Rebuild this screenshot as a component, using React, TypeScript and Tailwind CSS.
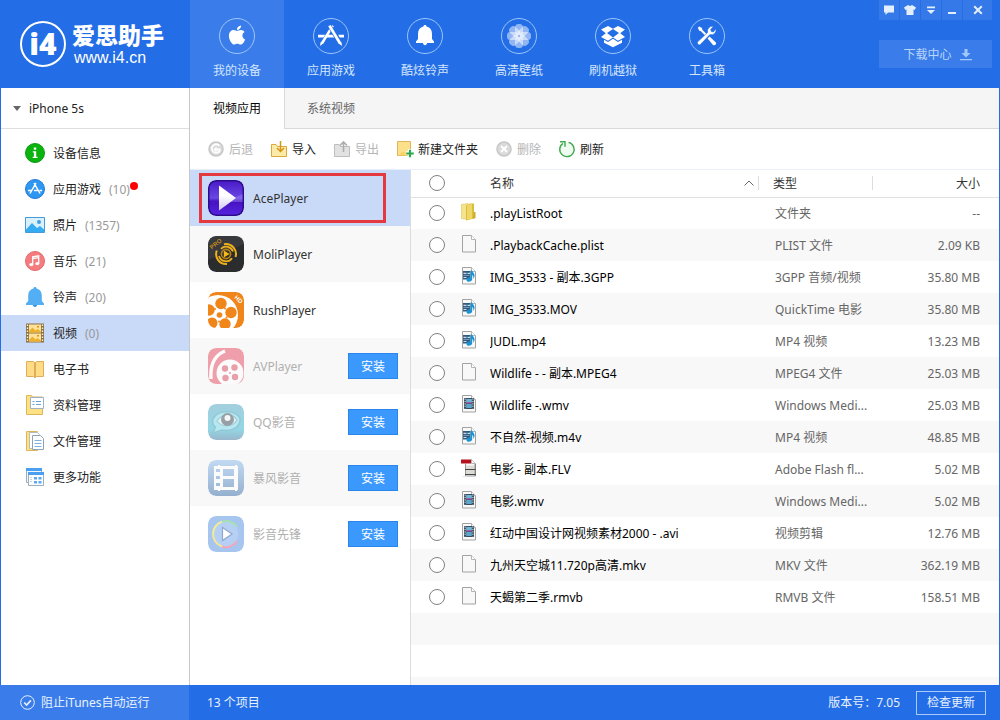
import type { ReactNode } from "react";
import { FaApple } from "react-icons/fa";

/* ---------- top navigation icons (36 x 36) ---------- */

function Ring({ children }: { children: ReactNode }) {
  return (
    <svg viewBox="0 0 36 36" className="size-9" fill="#fff" aria-hidden="true">
      <circle cx="18" cy="18" r="17.5" fill="none" stroke="#9cc6f8" />
      {children}
    </svg>
  );
}

const AppleIcon = () => (
  <Ring>
    <FaApple x="7" y="6" size={22} color="#fff" />
  </Ring>
);

const StoreIcon = () => (
  <Ring>
    <path d="M5 16.8h7.2l-1.6 2.7H5zM15 16.8h7l1.5 2.7H13.4zM25.2 16.8H31v2.7h-4.3z" />
    <path d="M19.8 7.6 9 25.2" stroke="#fff" strokeWidth="2.6" fill="none" />
    <path d="M16.4 7.6 26.8 25.2" stroke="#236de6" strokeWidth="4" fill="none" />
    <path d="M16.4 7.6 27 25.2" stroke="#fff" strokeWidth="2.8" fill="none" />
    <path d="m7.6 24 2.5 1.5L7 28zM25.6 25.4l2.7-1.5.9 4z" />
  </Ring>
);

const BellIcon = () => (
  <Ring>
    <path d="M18 7c1 0 1.6.7 1.6 1.5 3.600.9 5.400 3.500 5.400 7.500v5l2 2.500V25H9v-1.500l2-2.500v-5c0-4 1.800-6.600 5.400-7.500C16.400 7.700 17 7 18 7zM16 25h4c0 1.400-.900 2.200-2 2.200s-2-.800-2-2.200z" />
  </Ring>
);

const FlowerIcon = () => (
  <Ring>
    {[0, 45, 90, 135, 180, 225, 270, 315].map((a) => (
      <rect
        key={a}
        x="14"
        y="6"
        width="8"
        height="11.500"
        rx="3.500"
        fillOpacity=".5"
        transform={`rotate(${a} 18 18)`}
      />
    ))}
    <circle cx="18" cy="18" r="1" fill="#8fb8f6" />
  </Ring>
);

const BoxIcon = () => (
  <Ring>
    <path d="M6 11.500 13 8l5 2.800L23 8l7 3.500-4.800 3.700L30 19l-7 3.700-5-3.200-5 3.200L6 19l4.800-3.800z" />
    <path d="m18 10.900 6 4.200-6 4.300-6-4.300z" fill="#236de6" />
    <path d="m9 21.800 4 2.200 5-3.300 5 3.300 4-2.200v3L18 29.300l-9-4.500z" />
  </Ring>
);

const ToolsIcon = () => (
  <Ring>
    <path d="m8.800 9.800 1.500-1.400 2.700 1.700.3 1.700 6 6-1.400 1.400-6-6-1.600-.4z" />
    <path d="m18.600 20.400 1.900-1.900 6.200 5.700c1.300 1.600-1 3.900-2.700 2.700z" />
    <path
      d="M26.900 10.700a4.800 4.800 0 0 1-6 5.900L11.600 26.300a1.900 1.900 0 0 1-2.700-2.700l9.700-9.200a4.800 4.800 0 0 1 5.900-5.900l-2.800 2.900.6 2.100 2.100.5z"
      stroke="#236de6"
      strokeWidth=".6"
    />
  </Ring>
);

const navItems = [
  { label: "我的设备", icon: <AppleIcon /> },
  { label: "应用游戏", icon: <StoreIcon /> },
  { label: "酷炫铃声", icon: <BellIcon /> },
  { label: "高清壁纸", icon: <FlowerIcon /> },
  { label: "刷机越狱", icon: <BoxIcon /> },
  { label: "工具箱", icon: <ToolsIcon /> },
];

/* ---------- window buttons (12 x 12) ---------- */

const windowButtons = [
  { label: "反馈", wide: false, d: "M1 1.500h10v7H5L2.500 11V8.500H1z" },
  { label: "皮肤", wide: false, d: "M3.500 1.200h1.200c.6 1 2 1 2.600 0h1.200L12 3.400l-1.300 2.500-1.200-.5V11h-7V5.400l-1.200.5L0 3.400z" },
  { label: "菜单", wide: false, d: "M2 2.500h8v1.700H2zM2 6h8l-4 4z" },
  { label: "最小化", wide: false, d: "M2 8h8v2H2z" },
  { label: "关闭", wide: true, d: "m1.500 2.900 1.400-1.400L6 4.600l3.100-3.100 1.400 1.400L7.400 6l3.100 3.100-1.400 1.400L6 7.400l-3.100 3.100-1.400-1.400L4.600 6z" },
];

/* ---------- sidebar icons (20 x 20) ---------- */

function Glyph({ children }: { children: ReactNode }) {
  return (
    <svg viewBox="0 0 20 20" className="size-5 shrink-0" fill="none" aria-hidden="true">
      {children}
    </svg>
  );
}

const sideItems = [
  {
    label: "设备信息",
    icon: (
      <Glyph>
        <circle cx="10" cy="10" r="9.500" fill="#0ab30e" stroke="#0b9a12" />
        <path d="M8.800 4.500h2.400v2.200H8.800zM7.800 8.200h3.400v5.600h1.300v1.300H7.700v-1.300h1.200V9.500H7.800z" fill="#fff" />
      </Glyph>
    ),
  },
  {
    label: "应用游戏",
    count: "(10)",
    dot: true,
    icon: (
      <Glyph>
        <circle cx="10" cy="10" r="9.500" fill="#2e97f2" stroke="#2478d6" />
        <path d="m11 4-6 10.500M9 4l6 10.500M3 11.500h4M9 11.500h3.500M14.500 11.500H17" stroke="#fff" strokeWidth="1.500" />
      </Glyph>
    ),
  },
  {
    label: "照片",
    count: "(1357)",
    icon: (
      <Glyph>
        <path d="M.5 2.500h19v15H.5z" fill="#d9f0fd" stroke="#4a9ad8" />
        <path d="M1 14.500 7 8l5 5 3-2 4 3.500V17H1z" fill="#35abf1" />
        <circle cx="14" cy="7" r="2" fill="#3f9fe4" />
      </Glyph>
    ),
  },
  {
    label: "音乐",
    count: "(21)",
    icon: (
      <Glyph>
        <circle cx="10" cy="10" r="9.500" fill="#f57c7e" stroke="#e4686b" />
        <path d="M7.700 13.500V5.800l6-1v7.600M7.700 7.600l6-1" stroke="#fff" strokeWidth="1.300" />
        <ellipse cx="6.300" cy="13.600" rx="2" ry="1.600" fill="#fff" />
        <ellipse cx="12.300" cy="12.600" rx="2" ry="1.600" fill="#fff" />
      </Glyph>
    ),
  },
  {
    label: "铃声",
    count: "(20)",
    icon: (
      <Glyph>
        <path d="M10 0c1 0 1.600.6 1.600 1.500 3.500 1 5.200 3.500 5.200 7v5.600l2.200 2.400V18H1v-1.500l2.200-2.400V8.500c0-3.500 1.700-6 5.200-7C8.400.600 9 0 10 0z" fill="#53aef3" />
        <path d="M8 18h4c0 2.600-4 2.600-4 0z" fill="#2f8fe0" />
      </Glyph>
    ),
  },
  {
    label: "视频",
    count: "(0)",
    active: true,
    icon: (
      <Glyph>
        <path d="M1 .500h18v19H1z" fill="#8a7046" />
        <path d="M4 1.500h12v8H4zM4 10.500h12v8H4z" fill="#fde39a" />
        <path d="m4 8 3.500-3.500 3 3L12.500 6 16 8.500v1H4zM4 17l3.500-3.500 3 3 2-1.500 3.500 2.500v1H4z" fill="#eeb02c" />
        <path d="M12 3h2v1.500h-2zM12 12h2v1.500h-2z" fill="#f08a1d" />
        <path d="M2.500 1.500v18M17.500 1.500v18" stroke="#fff3d0" strokeWidth="1.400" strokeDasharray="1.500 1.500" />
      </Glyph>
    ),
  },
  {
    label: "电子书",
    icon: (
      <Glyph>
        <path d="M1.500 2.500h7L10 4l1.500-1.500h7v15h-7L10 19l-1.500-1.500h-7z" fill="#fddc85" stroke="#dfae5c" />
        <path d="M10 4v14" stroke="#dfae5c" strokeWidth="2" />
      </Glyph>
    ),
  },
  {
    label: "资料管理",
    icon: (
      <Glyph>
        <path d="M1.500.500h5l1 1.500h10v17.500h-16z" fill="#fde183" stroke="#dcb65a" />
        <path d="M5.500 2.500h13v11h-13z" fill="#fff" stroke="#9db2c6" />
        <path d="M7.500 6.500h2M7.500 9.500h2M11 6.500h5M11 9.500h5" stroke="#68a3dc" strokeWidth="1.200" />
      </Glyph>
    ),
  },
  {
    label: "文件管理",
    icon: (
      <Glyph>
        <path d="M1.500.500h11v19h-11z" fill="#fde183" stroke="#dcb65a" />
        <path d="M4.500 1.500h8l2 2v14h-10z" fill="#fff" stroke="#b3bcc5" />
        <path d="M7.500 4.500h8l3 3v11h-11z" fill="#fff" stroke="#8fa3b5" />
        <path d="M9.500 9.500h7M9.500 12.500h7M9.500 15.500h7" stroke="#7fb0de" />
      </Glyph>
    ),
  },
  {
    label: "更多功能",
    icon: (
      <Glyph>
        <path d="M1.500 1.500h15v14h-15z" fill="#eef5fc" stroke="#9aaec2" />
        <path d="M1 1h16v3H1z" fill="#4a9ff0" />
        <path d="M3.500 5.500h15v13h-15z" fill="#fff" stroke="#9aaec2" />
        <path d="M3 5h16v3H3z" fill="#4a9ff0" />
        <path d="M9 10h3v2.500H9zM13.500 10h3v2.500h-3zM9 14h3v2.500H9zM13.500 14h3v2.500h-3z" fill="#5aa9f2" />
        <path d="M5 10.500h2M5 12.500h2M5 14.500h2" stroke="#c9d3dc" />
      </Glyph>
    ),
  },
];

/* ---------- toolbar icons (16 x 16) ---------- */

function Tool({ children }: { children: ReactNode }) {
  return (
    <svg viewBox="0 0 16 16" className="size-4 shrink-0 overflow-visible" fill="none" aria-hidden="true">
      {children}
    </svg>
  );
}

const tools = [
  {
    label: "后退",
    disabled: true,
    icon: (
      <Tool>
        <circle cx="8" cy="8" r="7" fill="#dadada" stroke="#c6c6c6" strokeWidth="1.500" />
        <path d="M11.500 4.800A4.300 4.300 0 1 0 12 9.500M12.500 8.500H8" stroke="#fff" strokeWidth="1.800" />
        <path d="M8.500 5.500v6L5.500 8.500z" fill="#fff" />
      </Tool>
    ),
  },
  {
    label: "导入",
    icon: (
      <Tool>
        <path d="M.5 3.500H5l1.500 2h9v10H.5z" fill="#fdeaa6" stroke="#d9a93c" />
        <path d="M9.500 0v10M6 7l3.500 3.500L13 7" stroke="#d3951c" strokeWidth="1.500" />
      </Tool>
    ),
  },
  {
    label: "导出",
    disabled: true,
    icon: (
      <Tool>
        <path d="M.5 3.500H5l1.500 2h9v10H.5z" fill="#e2e2e2" stroke="#bdbdbd" />
        <path d="M9.500 11V1.500M6 4.500 9.500 1 13 4.500" stroke="#adadad" strokeWidth="1.600" />
      </Tool>
    ),
  },
  {
    label: "新建文件夹",
    icon: (
      <Tool>
        <path d="M.5.500h13v14H.5z" fill="#fde08a" stroke="#dfb65c" />
        <path d="M1 14.500 5 11h9v3.500z" fill="#fbd269" />
        <path d="M13 8v8.500M8.800 12.300H17.200" stroke="#fff" strokeWidth="4" />
        <path d="M13 8.700v7.600M9.200 12.500h7.600" stroke="#2fa84c" strokeWidth="2.200" />
      </Tool>
    ),
  },
  {
    label: "删除",
    disabled: true,
    icon: (
      <Tool>
        <circle cx="8" cy="8" r="7" fill="#dadada" stroke="#c6c6c6" strokeWidth="1.500" />
        <path d="m5 5 6 6M11 5l-6 6" stroke="#fff" strokeWidth="2" />
      </Tool>
    ),
  },
  {
    label: "刷新",
    icon: (
      <Tool>
        <circle cx="8" cy="8.500" r="7" fill="#effaf0" />
        <path d="M9.500 1.400a7.200 7.200 0 1 1-5.500 1" stroke="#3fa94e" strokeWidth="1.400" />
        <path d="M1 .800h5v5" stroke="#3fa94e" strokeWidth="1.400" />
      </Tool>
    ),
  },
];

/* ---------- player app icons (36 x 36) ---------- */

function AppIcon({ faded, children }: { faded?: boolean; children: ReactNode }) {
  return (
    <svg
      viewBox="0 0 36 36"
      className={faded ? "size-9 shrink-0 rounded-lg opacity-50" : "size-9 shrink-0 rounded-lg"}
      aria-hidden="true"
    >
      {children}
    </svg>
  );
}

const apps = [
  {
    name: "AcePlayer",
    installed: true,
    icon: (
      <AppIcon>
        <defs>
          <linearGradient id="ace" x2="0" y2="1">
            <stop offset="0" stopColor="#4a1cc8" />
            <stop offset=".5" stopColor="#6a48e2" />
            <stop offset=".6" stopColor="#4512c0" />
            <stop offset="1" stopColor="#5522dd" />
          </linearGradient>
          <linearGradient id="aceTri" x2="0" y2="1">
            <stop offset=".4" stopColor="#fff" />
            <stop offset="1" stopColor="#cfc6f2" />
          </linearGradient>
        </defs>
        <rect width="36" height="36" rx="8" fill="#2c0a8c" />
        <rect x="1.500" y="1.500" width="33" height="33" rx="7" fill="url(#ace)" />
        <path d="M1.500 22C12 23 25 19 34.500 14v8H1.500z" fill="#a592f5" opacity=".4" />
        <path d="M11 5.500 28 18 11 30.500z" fill="url(#aceTri)" />
      </AppIcon>
    ),
  },
  {
    name: "MoliPlayer",
    installed: true,
    icon: (
      <AppIcon>
        <rect width="36" height="36" rx="8" fill="#2b2c2e" />
        <path d="M0 8a8 8 0 0 1 8-8h20a8 8 0 0 1 8 8L0 24z" fill="#45464a" opacity=".5" />
        <circle cx="18" cy="18" r="4.600" fill="none" stroke="#b9830f" strokeWidth="1.600" />
        <path d="M8.800 14.500A10 10 0 0 0 19 28M16 8.200A10 10 0 0 1 27.500 21" fill="none" stroke="#eeb01a" strokeWidth="2" />
        <path d="M11 20a7.300 7.300 0 0 0 13 2.200M13 12.800A7.300 7.300 0 0 1 25 15.500" fill="none" stroke="#eeb01a" strokeWidth="1.800" />
        <path d="m15.800 14.500 5.800 3.500-5.800 3.500z" fill="#f7b916" />
        <text x="3" y="13" fontSize="6" fontWeight="700" fontFamily="Liberation Sans, sans-serif" fill="#c78f1b" transform="rotate(-38 4 12)">
          PRO
        </text>
      </AppIcon>
    ),
  },
  {
    name: "RushPlayer",
    installed: true,
    icon: (
      <AppIcon>
        <rect width="36" height="36" rx="8" fill="#f08519" />
        <circle cx="10" cy="23" r="20" fill="#fff" />
        <g fill="#f08519">
          <circle cx="13" cy="11.500" r="5.700" />
          <circle cx="23" cy="20.500" r="5.700" />
          <circle cx="17" cy="32" r="5.700" />
          <circle cx="4" cy="31" r="5.500" />
          <circle cx="1" cy="18" r="5.700" />
          <circle cx="11.500" cy="23" r="2.800" />
          <circle cx="17" cy="16.500" r="1" />
          <circle cx="18.500" cy="25.500" r="1" />
          <circle cx="11" cy="29.500" r="1" />
          <circle cx="7" cy="17" r="1" />
        </g>
        <text x="26" y="6" fontSize="6" fontWeight="700" fontFamily="Liberation Sans, sans-serif" fill="#fff" transform="rotate(42 26 6)">
          HD
        </text>
      </AppIcon>
    ),
  },
  {
    name: "AVPlayer",
    icon: (
      <AppIcon faded>
        <rect width="36" height="36" rx="8" fill="#e5485c" />
        <path d="M3 31C2 17 7 7 17 3" fill="none" stroke="#fff" strokeWidth="3.500" />
        <circle cx="22" cy="25" r="13.500" fill="#fff" />
        <g fill="#d9485c">
          <circle cx="17" cy="20.500" r="3.200" />
          <circle cx="26.500" cy="19.500" r="3.200" />
          <circle cx="17.500" cy="30" r="3.200" />
          <circle cx="27" cy="29" r="3.200" />
          <circle cx="22" cy="25" r="1" />
        </g>
      </AppIcon>
    ),
  },
  {
    name: "QQ影音",
    icon: (
      <AppIcon faded>
        <defs>
          <linearGradient id="qq" x2="0" y2="1">
            <stop offset="0" stopColor="#4aa0bf" />
            <stop offset=".7" stopColor="#2ab0cb" />
            <stop offset="1" stopColor="#35709a" />
          </linearGradient>
        </defs>
        <rect width="36" height="36" rx="8" fill="url(#qq)" />
        <path d="M5 15C9 6 26 5 32 14c1 9-8 14-18 12l-9 3 2.500-6C5 21 4 18 5 15z" fill="#6fd3e6" stroke="#2b93ad" strokeWidth="1.500" />
        <path d="M9 17c4-7 16-8 20-1-4 7-15 8-20 1z" fill="#c5e6ec" stroke="#4c99aa" strokeWidth="1.200" />
        <circle cx="19.500" cy="15.500" r="6.500" fill="#2d4650" />
        <circle cx="19.500" cy="14" r="3" fill="#eee" />
      </AppIcon>
    ),
  },
  {
    name: "暴风影音",
    icon: (
      <AppIcon faded>
        <defs>
          <linearGradient id="storm" x2="0" y2="1">
            <stop offset="0" stopColor="#8fbcf0" />
            <stop offset="1" stopColor="#346aa5" />
          </linearGradient>
        </defs>
        <rect width="36" height="36" rx="8" fill="url(#storm)" />
        <path
          fillRule="evenodd"
          d="M6 6h4v-1h2v1h15v-1h2v1h1v24h-1v1h-2v-1H12v1h-2v-1H6zM15 9v7h11V9zM15 19v8h11v-8zM8 9v3h4V9zM8 16v3h4v-3zM8 23v3h4v-3z"
          fill="#fff"
        />
      </AppIcon>
    ),
  },
  {
    name: "影音先锋",
    icon: (
      <AppIcon faded>
        <rect width="36" height="36" rx="8" fill="#508fe0" />
        <circle cx="18" cy="18" r="13" fill="#6da3e8" />
        <g fill="none" strokeWidth="2">
          <path d="M5 18A13 13 0 0 1 14 5.600" stroke="#e6dc30" />
          <path d="M14 5.600A13 13 0 0 1 29 11" stroke="#4cc76a" />
          <path d="M29 11a13 13 0 0 1 0 14" stroke="#5d8de8" />
          <path d="M29 25a13 13 0 0 1-15 5.500" stroke="#ee4f7c" />
          <path d="M14 30.500A13 13 0 0 1 5 18" stroke="#f2cf2e" />
        </g>
        <path d="M14.500 11.500 24 18l-9.500 6.500z" fill="#fff" stroke="#2452a8" strokeWidth="1.200" />
      </AppIcon>
    ),
  },
];

/* ---------- file type icons (18 x 18) ---------- */

type Kind = "folder" | "blank" | "media" | "film" | "flash";

function FileIcon({ kind }: { kind: Kind }) {
  return (
    <svg viewBox="0 0 18 18" className="block size-[18px]" fill="none" aria-hidden="true">
      {kind === "folder" ? (
        <>
          <path d="M.5 1.500 7 .500v16l-6.500-1z" fill="#f6e38d" stroke="#dcc25a" strokeWidth=".6" />
          <path d="M5 2.500 9 .500h4v15L5 17.500z" fill="#d9bd3c" />
          <path d="M6 2 11 1v14.500L6 17z" fill="#eed667" />
          <path d="M13 9h1.500v6L12 16z" fill="#c9a92e" />
        </>
      ) : (
        <>
          <path d="M1.500.500h9l4 4v12.500h-13z" fill="#f8f8f8" stroke="#a2a2a2" />
          <path d="M10.500.500v4h4" fill="#fff" stroke="#b5b5b5" />
        </>
      )}
      {kind === "media" && (
        <>
          <path d="M2 4h7.500v8.500H2z" fill="#34597e" />
          <path d="M2.500 6.300h3M6.500 6.300h2.500M2.500 10.500h3" stroke="#c4dcec" strokeWidth="1.200" />
          <path d="M2.500 8.400h6" stroke="#8fb4cc" strokeWidth=".8" />
          <path d="M9.500 3.500h1.700c.3 2 2.300 2.500 2.300 5 0 1.200-.5 2.500-1.200 3.200.3-2-.2-3-1.100-3.700v4c0 3-5.700 3.800-5.700.9 0-1.800 2.200-2.700 4-2.200z" fill="#1b93d3" />
        </>
      )}
      {kind === "film" && (
        <>
          <path d="M3 3h10v11H3z" fill="#3a4c5c" />
          <path d="M5.200 4h5.600v4H5.200z" fill="#73b7d6" />
          <path d="M5.200 9h5.600v4H5.200z" fill="#5ba7cc" />
          <path d="M5.200 7h5.600v1.500H5.200z" fill="#9b59a8" />
          <path d="M4.100 3.500v10M11.900 3.500v10" stroke="#e8eef2" strokeDasharray="1.200 1.200" />
        </>
      )}
      {kind === "flash" && (
        <>
          <path d="M0 5h5v12.500H0zM0 0h10v5H0z" fill="#fff" />
          <path d="M0 .500h10v4H0z" fill="#b3121d" />
          <path d="M5 6.500h8.500v9.500H5z" fill="#dcdcd4" />
          <path d="M4.500 5.500v11M14 5.500v11" stroke="#333" strokeDasharray="1 1" />
          <path d="M4 10.500h10.500M4 15.500h10.500" stroke="#444" />
        </>
      )}
    </svg>
  );
}

const files: { name: string; type: string; size: string; kind: Kind }[] = [
  { name: ".playListRoot", type: "文件夹", size: "--", kind: "folder" },
  { name: ".PlaybackCache.plist", type: "PLIST 文件", size: "2.09 KB", kind: "blank" },
  { name: "IMG_3533 - 副本.3GPP", type: "3GPP 音频/视频", size: "35.80 MB", kind: "media" },
  { name: "IMG_3533.MOV", type: "QuickTime 电影", size: "35.80 MB", kind: "media" },
  { name: "JUDL.mp4", type: "MP4 视频", size: "13.23 MB", kind: "media" },
  { name: "Wildlife - - 副本.MPEG4", type: "MPEG4 文件", size: "25.03 MB", kind: "blank" },
  { name: "Wildlife -.wmv", type: "Windows Medi...", size: "25.03 MB", kind: "film" },
  { name: "不自然-视频.m4v", type: "MP4 视频", size: "48.85 MB", kind: "media" },
  { name: "电影 - 副本.FLV", type: "Adobe Flash fl...", size: "5.02 MB", kind: "flash" },
  { name: "电影.wmv", type: "Windows Medi...", size: "5.02 MB", kind: "film" },
  { name: "红动中国设计网视频素材2000 - .avi", type: "视频剪辑", size: "12.76 MB", kind: "film" },
  { name: "九州天空城11.720p高清.mkv", type: "MKV 文件", size: "362.19 MB", kind: "blank" },
  { name: "天蝎第二季.rmvb", type: "RMVB 文件", size: "158.51 MB", kind: "blank" },
];

function RoundCheck({ label }: { label: string }) {
  return (
    <input
      type="checkbox"
      aria-label={label}
      className="block size-4 appearance-none rounded-full border border-[#808080] bg-white checked:bg-[#3b98fc]"
    />
  );
}

/* ---------- page sections ---------- */

function Header() {
  return (
    <header className="flex h-22 shrink-0 bg-[#236de6] text-[#d5e6fd]">
      <a href="#home" className="flex w-[190px] shrink-0 items-center gap-1.5 pl-5 text-white">
        <span className="flex size-[46px] items-center justify-center rounded-full border-2 border-white text-3xl leading-none font-black">
          i4
        </span>
        <span className="flex flex-col">
          <span className="text-[23px] leading-7 font-black">爱思助手</span>
          <span className="pl-0.5 font-['Liberation_Sans',sans-serif] text-base leading-[18px]">www.i4.cn</span>
        </span>
      </a>
      <nav className="flex">
        {navItems.map((item, i) => (
          <a
            key={item.label}
            href="#nav"
            className={
              i === 0
                ? "flex w-[94px] flex-col items-center gap-[9px] bg-[#3a7dea] pt-[18px]"
                : "flex w-[94px] flex-col items-center gap-[9px] pt-[18px]"
            }
          >
            {item.icon}
            <span className="leading-4">{item.label}</span>
          </a>
        ))}
      </nav>
      <div className="mr-2 ml-auto flex w-[113px] flex-col gap-5">
        <div className="flex h-5 gap-px">
          {windowButtons.map((b) => (
            <button
              key={b.label}
              type="button"
              aria-label={b.label}
              className={
                b.wide
                  ? "flex flex-1 items-center justify-center bg-[#3578e8]"
                  : "flex w-5 items-center justify-center bg-[#3578e8]"
              }
            >
              <svg viewBox="0 0 12 12" className="size-3" fill="#e3effe" aria-hidden="true">
                <path d={b.d} />
              </svg>
            </button>
          ))}
        </div>
        <button type="button" className="flex h-7 items-center justify-center gap-2 bg-[#3a7dea] pt-0.5 pl-1 text-[#b9d5fb]">
          下载中心
          <svg viewBox="0 0 12 12" className="size-3" fill="#a3c7f9" aria-hidden="true">
            <path d="M4.500 0h3v4h3L6 8.500 1.500 4h3zM0 10h12v1.200H0z" />
          </svg>
        </button>
      </div>
    </header>
  );
}

function Sidebar() {
  return (
    <aside className="w-[190px] shrink-0 border-r border-l border-r-[#c8c8c8] border-l-[#236de6] bg-white text-[#222]">
      <button type="button" className="flex h-[41px] w-full items-center gap-2 border-b border-[#dedede] pl-3">
        <svg viewBox="0 0 8 5" className="h-[5px] w-2" fill="#666" aria-hidden="true">
          <path d="M0 0h8L4 5z" />
        </svg>
        <span className="pt-0.5">iPhone 5s</span>
      </button>
      <ul className="pt-1.5">
        {sideItems.map((s) => (
          <li key={s.label}>
            <a
              href="#section"
              className={
                s.active
                  ? "flex h-9 items-center gap-2 bg-[#c9daf8] pl-6"
                  : "flex h-9 items-center gap-2 pl-6"
              }
            >
              {s.icon}
              <span className="pt-0.5">{s.label}</span>
              {s.count && (
                <span className="relative pt-0.5 text-[#999]">
                  {s.count}
                  {s.dot && <span className="absolute top-0.5 -right-2 size-2 rounded-full bg-[#f00]" />}
                </span>
              )}
            </a>
          </li>
        ))}
      </ul>
    </aside>
  );
}

function AppList() {
  return (
    <ul className="w-[221px] shrink-0 border-r border-[#dcdcdc]">
      {apps.map((a, i) => (
        <li
          key={a.name}
          className={
            i === 0
              ? "relative flex h-14 items-center gap-[9px] bg-[#c9daf8] pr-3 pl-[18px]"
              : "flex h-14 items-center gap-[9px] pr-3 pl-[18px] even:bg-[#f8f8f8]"
          }
        >
          {i === 0 && <span className="absolute inset-y-[3px] right-6 left-[9px] border-3 border-[#e4393f]" />}
          {a.icon}
          <span className={a.installed ? "pt-0.5 text-[#333]" : "pt-0.5 text-[#b0b0b0]"}>{a.name}</span>
          {!a.installed && (
            <button
              type="button"
              className="ml-auto h-[26px] w-[50px] border border-[#2a86ec] bg-[#3b98fc] pt-0.5 text-white"
            >
              安装
            </button>
          )}
        </li>
      ))}
    </ul>
  );
}

function FileTable() {
  return (
    <div className="flex min-w-0 flex-1 flex-col">
      <table className="w-full table-fixed border-collapse text-left">
        <colgroup>
          <col className="w-[50px]" />
          <col className="w-[29px]" />
          <col />
          <col className="w-[114px]" />
          <col className="w-[126px]" />
        </colgroup>
        <thead>
          <tr className="h-[27px] border-b border-[#e2e2e2] text-[#333]">
            <th className="pl-[18px]">
              <RoundCheck label="全选" />
            </th>
            <th aria-label="图标" />
            <th className="font-normal">
              <span className="flex h-3.5 items-center justify-between border-r border-[#ddd] pr-1">
                <span className="pt-0.5">名称</span>
                <svg viewBox="0 0 10 6" className="h-1.5 w-2.5" fill="none" stroke="#666" aria-hidden="true">
                  <path d="M.5 5.500 5 1l4.500 4.500" />
                </svg>
              </span>
            </th>
            <th className="font-normal">
              <span className="flex h-3.5 items-center border-r border-[#ddd] pt-0.5 pl-3.5">类型</span>
            </th>
            <th className="pt-0.5 pr-[19px] text-right font-normal">大小</th>
          </tr>
        </thead>
        <tbody>
          {files.map((f) => (
            <tr key={f.name} className="h-8 text-[#666] even:bg-[#f8f8f8]">
              <td className="pl-[18px]">
                <RoundCheck label={f.name} />
              </td>
              <td className="pb-0.5">
                <FileIcon kind={f.kind} />
              </td>
              <td className="truncate pt-0.5 text-black">{f.name}</td>
              <td className="pt-0.5 pl-4 whitespace-nowrap">{f.type}</td>
              <td className="pt-0.5 pr-[19px] text-right">{f.size}</td>
            </tr>
          ))}
        </tbody>
      </table>
      <div className="flex-1 bg-[repeating-linear-gradient(#f8f8f8_0_32px,#fff_32px_64px)]" />
    </div>
  );
}

function Footer() {
  return (
    <footer className="flex h-[35px] shrink-0 items-center bg-[#236de6] text-[#e8f2ff]">
      <button type="button" className="flex h-full w-[189px] shrink-0 items-center gap-1.5 bg-[#3a7dea] pl-5">
        <svg viewBox="0 0 15 15" className="size-[15px]" fill="none" stroke="#e8f2ff" aria-hidden="true">
          <circle cx="7.500" cy="7.500" r="6.800" />
          <path d="m4.200 7.500 2.400 2.500 4.300-4.600" strokeWidth="1.600" />
        </svg>
        阻止iTunes自动运行
      </button>
      <span className="pl-[18px]">13 个项目</span>
      <span className="mr-4 ml-auto">版本号：7.05</span>
      <button type="button" className="mr-3.5 h-6 w-[70px] border border-[#a9cbfa]">
        检查更新
      </button>
    </footer>
  );
}

export default function App() {
  return (
    <div className="flex min-h-screen flex-col bg-white font-['Noto_Sans','Noto_Sans_CJK_SC',sans-serif] text-xs" lang="zh-CN">
      <Header />
      <div className="flex flex-1">
        <Sidebar />
        <main className="flex min-w-0 flex-1 flex-col border-r border-[#236de6]">
          <div className="flex h-[41px] shrink-0 bg-[#f5f5f5]">
            <button type="button" className="w-[95px] border-r border-[#d9d9d9] bg-white text-black">
              视频应用
            </button>
            <div className="flex flex-1 border-b border-[#d9d9d9] pl-[22px]">
              <button type="button" className="pt-0.5 text-[#666]">
                系统视频
              </button>
            </div>
          </div>
          <div className="flex h-[41px] shrink-0 items-center gap-[18px] border-b border-[#e8effa] pl-[18px]">
            {tools.map((t) => (
              <button
                key={t.label}
                type="button"
                disabled={t.disabled}
                className="flex items-center gap-[5px] text-[#222] disabled:text-[#b5b5b5]"
              >
                {t.icon}
                <span className="pt-0.5">{t.label}</span>
              </button>
            ))}
          </div>
          <div className="flex flex-1">
            <AppList />
            <FileTable />
          </div>
        </main>
      </div>
      <Footer />
    </div>
  );
}
